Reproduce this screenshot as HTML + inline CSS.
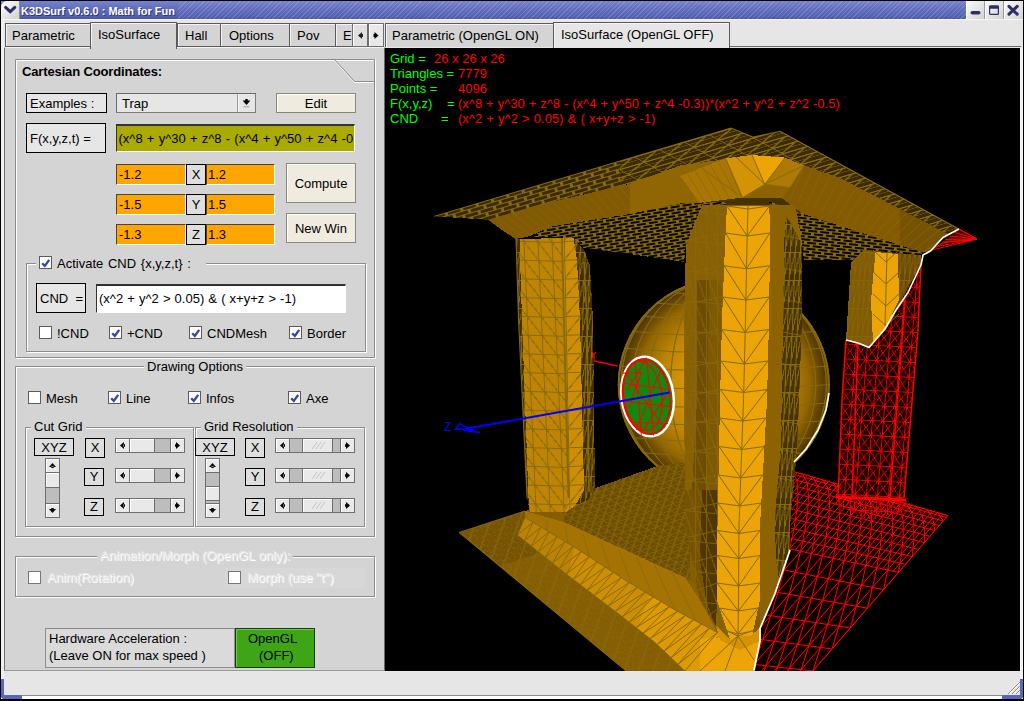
<!DOCTYPE html>
<html>
<head>
<meta charset="utf-8">
<title>K3DSurf v0.6.0 : Math for Fun</title>
<style>
html,body{margin:0;padding:0;background:#000;}
body{width:1024px;height:701px;position:relative;overflow:hidden;font-family:"Liberation Sans",sans-serif;font-size:13px;color:#000;}
.a{position:absolute;box-sizing:border-box;}
.t{position:absolute;white-space:pre;line-height:15px;height:15px;}
#win{left:0;top:0;width:1024px;height:701px;background:#e6e6e6;border:1px solid #000;border-radius:7px 7px 5px 5px;overflow:hidden;}
#title{left:1px;top:1px;width:1022px;height:18px;background:linear-gradient(#7583cd 0%,#636fbe 40%,#5461b1 85%,#49559e 100%);}
#hatch{left:178px;top:1px;width:788px;height:18px;background:repeating-linear-gradient(135deg,rgba(255,255,255,0) 0px,rgba(255,255,255,0) 2.2px,rgba(210,215,240,.22) 2.2px,rgba(210,215,240,.22) 3.2px);}
.wbtn{top:1px;height:18px;background:linear-gradient(135deg,#fafafa,#d2d2d2);border-left:1px solid #fff;border-right:1px solid #9a9a9a;}
.panel{background:#d4d4d4;}
.tab{background:#d4d4d4;border:1px solid #5a5a5a;border-bottom:none;box-shadow:inset 1px 1px 0 #f4f4f4;}
.gb{border:1px solid #8c8c8c;box-shadow:inset 1px 1px 0 #fff,1px 1px 0 #fff;}
.lbl{background:#e6e6e6;border:1px solid #000;}
.gl{background:#d4d4d4;padding:0 3px;}
.cb{width:13px;height:13px;background:#fff;border:1px solid #5c5c5c;}
.cb svg{position:absolute;left:0;top:0;}
.btn{background:#efecdf;border:1px solid #8a8778;box-shadow:inset 1px 1px 0 #fff;}
.sb{background:#bdbdbd;border:1px solid #6e6e6e;}
.sbb{background:#e9e9e9;border:1px solid #6e6e6e;box-shadow:inset 1px 1px 0 #fff;}
.dis{color:#e9e9e9;text-shadow:1px 1px 0 #fff;}
</style>
</head>
<body>
<div id="win" class="a"></div>
<div id="title" class="a"></div>
<div id="hatch" class="a"></div>
<!-- title bar -->
<div class="a" style="left:1px;top:1px;width:19px;height:18px;background:linear-gradient(135deg,#ffffff,#d0d0d0);border-right:1px solid #8a8a8a;border-radius:6px 0 0 0;"></div>
<svg class="a" style="left:1px;top:1px" width="19" height="18" viewBox="0 0 19 18"><path d="M4.6 6.4 L9.2 10.6 L13.8 6.4" fill="none" stroke="#2b2f66" stroke-width="3" stroke-linecap="round" stroke-linejoin="miter"/></svg>
<div class="t" style="left:21px;top:4px;font-size:11px;font-weight:bold;color:#fff;text-shadow:1px 1px 0 #2e3670;letter-spacing:0px;">K3DSurf v0.6.0 : Math for Fun</div>
<div class="a wbtn" style="left:966px;width:19px;"></div>
<div class="a wbtn" style="left:985px;width:19px;"></div>
<div class="a wbtn" style="left:1004px;width:19px;border-right:none;"></div>
<svg class="a" style="left:966px;top:1px" width="57" height="18" viewBox="0 0 57 18">
<rect x="4.5" y="10" width="10" height="3.6" rx="1.8" fill="#2b2f66"/>
<rect x="23.6" y="5" width="8.8" height="8.4" rx="1" fill="none" stroke="#2b2f66" stroke-width="1.2"/><rect x="23" y="4.4" width="10" height="3.4" rx="1" fill="#2b2f66"/>
<path d="M43 5.4 L51.2 13.2 M51.2 5.4 L43 13.2" stroke="#2b2f66" stroke-width="3" stroke-linecap="round"/>
</svg>
<div class="a" style="left:1px;top:19px;width:1022px;height:1px;background:#f6f6f6;"></div>

<!-- left panel -->
<div class="a" style="left:1px;top:20px;width:3px;height:678px;background:#f0f0f0;"></div>
<div class="a panel" style="left:4px;top:47px;width:381px;height:624px;border-left:1px solid #707070;border-top:1px solid #f2f2f2;border-right:1px solid #6a6a6a;border-bottom:1px solid #9a9a9a;"></div>
<!-- left tabs -->
<div class="a tab" style="left:5px;top:23px;width:86px;height:24px;"></div>
<div class="a tab" style="left:177px;top:23px;width:44px;height:24px;"></div>
<div class="a tab" style="left:220px;top:23px;width:70px;height:24px;"></div>
<div class="a tab" style="left:289px;top:23px;width:47px;height:24px;"></div>
<div class="a tab" style="left:335px;top:23px;width:20px;height:24px;border-right:none;"></div>
<div class="a" style="left:5px;top:46px;width:348px;height:1px;background:#5a5a5a;"></div>
<div class="a tab" style="left:90px;top:22px;width:87px;height:27px;border-bottom:none;"></div>
<div class="a" style="left:91px;top:46px;width:85px;height:4px;background:#d4d4d4;"></div>
<div class="t" style="left:12px;top:28px;">Parametric</div>
<div class="t" style="left:98px;top:27px;">IsoSurface</div>
<div class="t" style="left:185px;top:28px;">Hall</div>
<div class="t" style="left:229px;top:28px;">Options</div>
<div class="t" style="left:297px;top:28px;">Pov</div>
<div class="t" style="left:343px;top:28px;">E</div>
<div class="a sbb" style="left:352px;top:23px;width:16px;height:24px;background:#e0e0e0;"></div>
<div class="a sbb" style="left:368px;top:23px;width:16px;height:24px;background:#e8e8e8;"></div>
<svg class="a" style="left:352px;top:23px" width="32" height="24" viewBox="0 0 32 24"><path d="M10 9 L6 12.5 L10 16 Z" fill="#222"/><path d="M22.5 9 L26.5 12.5 L22.5 16 Z" fill="#000"/><rect x="21.5" y="11" width="2" height="3" fill="#000"/><rect x="9" y="11" width="2" height="3" fill="#222"/></svg>

<!-- right tabs -->
<div class="a" style="left:385px;top:46px;width:636px;height:2px;background:#e6e6e6;border-top:1px solid #6a6a6a;"></div>
<div class="a tab" style="left:385px;top:23px;width:169px;height:24px;"></div>
<div class="a tab" style="left:553px;top:22px;width:177px;height:26px;background:#e6e6e6;"></div>
<div class="t" style="left:392px;top:28px;">Parametric (OpenGL ON)</div>
<div class="t" style="left:561px;top:27px;">IsoSurface (OpenGL OFF)</div>
<!-- canvas -->
<div class="a" style="left:385px;top:48px;width:635px;height:623px;background:#000;"></div>
<div class="a" style="left:1020px;top:48px;width:3px;height:648px;background:#f4f4f4;"></div>

<!-- group box 1 -->
<svg class="a" style="left:0;top:0" width="385" height="701" viewBox="0 0 385 701" fill="none">
<path d="M16.5 358.5 V60.5 H373.5 M334.5 60.5 L354.5 82.5 H373.5 M375.5 59.5 V358.5 H16.5" stroke="#fff"/>
<path d="M15.5 357.5 V59.5 H374.5 V357.5 Z M334.5 59.5 L354.5 81.5 H374.5" stroke="#8c8c8c"/>
</svg>
<div class="t" style="left:22px;top:64px;font-weight:bold;letter-spacing:-0.14px;">Cartesian Coordinates:</div>
<div class="a lbl" style="left:26px;top:93px;width:81px;height:20px;"></div><div class="t" style="left:30px;top:96px;">Examples :</div>
<div class="a" style="left:116px;top:93px;width:140px;height:20px;background:#e6e6e6;border:1px solid;border-color:#6a6a6a #7c7c7c #7c7c7c #6a6a6a;"></div>
<div class="t" style="left:122px;top:96px;">Trap</div>
<div class="a" style="left:237px;top:94px;width:1px;height:18px;background:#9a9a9a;"></div><div class="a" style="left:238px;top:94px;width:1px;height:18px;background:#f8f8f8;"></div>
<svg class="a" style="left:238px;top:94px" width="17" height="18" viewBox="0 0 17 18"><path d="M4.6 6.6 H12.4 L8.5 11 Z" fill="#000"/><rect x="7.3" y="5" width="2.4" height="3" fill="#000"/><rect x="5.5" y="12" width="6" height="1.4" fill="#b4b4b4"/></svg>
<div class="a btn" style="left:276px;top:93px;width:80px;height:20px;"></div><div class="t" style="left:276px;width:80px;text-align:center;top:96px;">Edit</div>
<div class="a lbl" style="left:26px;top:123px;width:80px;height:30px;"></div><div class="t" style="left:30px;top:131px;">F(x,y,z,t) =</div>
<div class="a" style="left:116px;top:124px;width:239px;height:28px;background:#aaaa00;border:1px solid;border-color:#333 #fff #fff #333;border-top-width:2px;overflow:hidden;"><div class="t" style="left:1.5px;top:5px;word-spacing:0.6px;">(x^8 + y^30 + z^8 - (x^4 + y^50 + z^4 -0.3))*(x^2 + y^2 + z^2 -0.5)</div></div>

<div class="a" style="left:116px;top:164px;width:70px;height:21px;background:#ffa500;border:1px solid;border-color:#444 #fff #fff #444;"></div><div class="t" style="left:119px;top:167px;">-1.2</div>
<div class="a lbl" style="left:186px;top:164px;width:20px;height:21px;background:#dedede;"></div><div class="t" style="left:186px;width:20px;text-align:center;top:167px;">X</div>
<div class="a" style="left:206px;top:164px;width:69px;height:21px;background:#ffa500;border:1px solid;border-color:#444 #fff #fff #444;"></div><div class="t" style="left:208px;top:167px;">1.2</div>
<div class="a" style="left:116px;top:194px;width:70px;height:21px;background:#ffa500;border:1px solid;border-color:#444 #fff #fff #444;"></div><div class="t" style="left:119px;top:197px;">-1.5</div>
<div class="a lbl" style="left:186px;top:194px;width:20px;height:21px;background:#dedede;"></div><div class="t" style="left:186px;width:20px;text-align:center;top:197px;">Y</div>
<div class="a" style="left:206px;top:194px;width:69px;height:21px;background:#ffa500;border:1px solid;border-color:#444 #fff #fff #444;"></div><div class="t" style="left:208px;top:197px;">1.5</div>
<div class="a" style="left:116px;top:224px;width:70px;height:21px;background:#ffa500;border:1px solid;border-color:#444 #fff #fff #444;"></div><div class="t" style="left:119px;top:227px;">-1.3</div>
<div class="a lbl" style="left:186px;top:224px;width:20px;height:21px;background:#dedede;"></div><div class="t" style="left:186px;width:20px;text-align:center;top:227px;">Z</div>
<div class="a" style="left:206px;top:224px;width:69px;height:21px;background:#ffa500;border:1px solid;border-color:#444 #fff #fff #444;"></div><div class="t" style="left:208px;top:227px;">1.3</div>
<div class="a btn" style="left:286px;top:163px;width:70px;height:40px;"></div><div class="t" style="left:286px;width:70px;text-align:center;top:176px;">Compute</div>
<div class="a btn" style="left:286px;top:213px;width:70px;height:30px;"></div><div class="t" style="left:286px;width:70px;text-align:center;top:221px;">New Win</div>

<!-- CND group -->
<div class="a gb" style="left:26px;top:263px;width:340px;height:89px;"></div>
<div class="a" style="left:36px;top:261px;width:170px;height:6px;background:#d4d4d4;"></div>
<div class="a cb" style="left:39px;top:256px;"><svg width="11" height="11" viewBox="0 0 11 11"><path d="M2.2 6.2 L4.8 9 L9.2 2.8" fill="none" stroke="#3546ac" stroke-width="2.3"/></svg></div>
<div class="t" style="left:57px;top:256px;word-spacing:1.1px;">Activate CND {x,y,z,t} :</div>
<div class="a lbl" style="left:36px;top:283px;width:50px;height:30px;"></div><div class="t" style="left:40px;top:291px;">CND  =</div>
<div class="a" style="left:96px;top:284px;width:250px;height:29px;background:#fff;border:1px solid;border-color:#333 #fff #fff #333;border-top-width:2px;"></div>
<div class="t" style="left:99px;top:291px;word-spacing:0.5px;">(x^2 + y^2 &gt; 0.05) &amp; ( x+y+z &gt; -1)</div>
<div class="a cb" style="left:39px;top:326px;"></div><div class="t" style="left:57px;top:326px;">!CND</div>
<div class="a cb" style="left:109px;top:326px;"><svg width="11" height="11" viewBox="0 0 11 11"><path d="M2.2 6.2 L4.8 9 L9.2 2.8" fill="none" stroke="#3546ac" stroke-width="2.3"/></svg></div><div class="t" style="left:127px;top:326px;">+CND</div>
<div class="a cb" style="left:189px;top:326px;"><svg width="11" height="11" viewBox="0 0 11 11"><path d="M2.2 6.2 L4.8 9 L9.2 2.8" fill="none" stroke="#3546ac" stroke-width="2.3"/></svg></div><div class="t" style="left:207px;top:326px;">CNDMesh</div>
<div class="a cb" style="left:289px;top:326px;"><svg width="11" height="11" viewBox="0 0 11 11"><path d="M2.2 6.2 L4.8 9 L9.2 2.8" fill="none" stroke="#3546ac" stroke-width="2.3"/></svg></div><div class="t" style="left:307px;top:326px;">Border</div>

<!-- Drawing options -->
<div class="a gb" style="left:15px;top:366px;width:360px;height:171px;"></div>
<div class="t gl" style="left:144px;top:359px;">Drawing Options</div>
<div class="a cb" style="left:28px;top:391px;"></div><div class="t" style="left:46px;top:391px;">Mesh</div>
<div class="a cb" style="left:108px;top:391px;"><svg width="11" height="11" viewBox="0 0 11 11"><path d="M2.2 6.2 L4.8 9 L9.2 2.8" fill="none" stroke="#3546ac" stroke-width="2.3"/></svg></div><div class="t" style="left:126px;top:391px;">Line</div>
<div class="a cb" style="left:188px;top:391px;"><svg width="11" height="11" viewBox="0 0 11 11"><path d="M2.2 6.2 L4.8 9 L9.2 2.8" fill="none" stroke="#3546ac" stroke-width="2.3"/></svg></div><div class="t" style="left:206px;top:391px;">Infos</div>
<div class="a cb" style="left:288px;top:391px;"><svg width="11" height="11" viewBox="0 0 11 11"><path d="M2.2 6.2 L4.8 9 L9.2 2.8" fill="none" stroke="#3546ac" stroke-width="2.3"/></svg></div><div class="t" style="left:306px;top:391px;">Axe</div>

<div class="a gb" style="left:25px;top:427px;width:169px;height:100px;"></div>
<div class="t gl" style="left:31px;top:419px;padding:0 4px 0 3px;">Cut Grid</div>
<div class="a gb" style="left:195px;top:427px;width:170px;height:100px;"></div>
<div class="t gl" style="left:201px;top:419px;">Grid Resolution</div>

<div class="a lbl" style="left:34px;top:438px;width:40px;height:18px;background:#dedede;"></div><div class="t" style="left:34px;width:40px;text-align:center;top:440px;">XYZ</div>
<div class="a lbl" style="left:85px;top:438px;width:20px;height:20px;background:#dedede;"></div><div class="t" style="left:85px;width:20px;text-align:center;top:440px;">X</div>
<div class="a lbl" style="left:84px;top:468px;width:20px;height:18px;background:#dedede;"></div><div class="t" style="left:84px;width:20px;text-align:center;top:469px;">Y</div>
<div class="a lbl" style="left:84px;top:498px;width:20px;height:18px;background:#dedede;"></div><div class="t" style="left:84px;width:20px;text-align:center;top:499px;">Z</div>
<div class="a lbl" style="left:195px;top:438px;width:40px;height:18px;background:#dedede;"></div><div class="t" style="left:195px;width:40px;text-align:center;top:440px;">XYZ</div>
<div class="a lbl" style="left:245px;top:438px;width:20px;height:20px;background:#dedede;"></div><div class="t" style="left:245px;width:20px;text-align:center;top:440px;">X</div>
<div class="a lbl" style="left:245px;top:468px;width:20px;height:18px;background:#dedede;"></div><div class="t" style="left:245px;width:20px;text-align:center;top:469px;">Y</div>
<div class="a lbl" style="left:245px;top:498px;width:20px;height:18px;background:#dedede;"></div><div class="t" style="left:245px;width:20px;text-align:center;top:499px;">Z</div>
<!--SB0-->
<div class="a sb" style="left:115px;top:438px;width:70px;height:15px;"></div>
<div class="a sbb" style="left:115px;top:438px;width:15px;height:15px;"></div>
<svg class="a" style="left:115px;top:438px" width="15" height="15" viewBox="0 0 15 15"><path d="M9 4 L5 7.5 L9 11 Z M8.5 6.3 h1.5 v2.4 h-1.5Z" fill="#000"/></svg>
<div class="a sbb" style="left:170px;top:438px;width:15px;height:15px;"></div>
<svg class="a" style="left:170px;top:438px" width="15" height="15" viewBox="0 0 15 15"><path d="M6 4 L10 7.5 L6 11 Z M5 6.3 h1.5 v2.4 h-1.5Z" fill="#000"/></svg>
<div class="a sbb" style="left:129px;top:438px;width:26px;height:15px;"></div>
<div class="a sb" style="left:275px;top:438px;width:80px;height:15px;"></div>
<div class="a sbb" style="left:275px;top:438px;width:15px;height:15px;"></div>
<svg class="a" style="left:275px;top:438px" width="15" height="15" viewBox="0 0 15 15"><path d="M9 4 L5 7.5 L9 11 Z M8.5 6.3 h1.5 v2.4 h-1.5Z" fill="#000"/></svg>
<div class="a sbb" style="left:340px;top:438px;width:15px;height:15px;"></div>
<svg class="a" style="left:340px;top:438px" width="15" height="15" viewBox="0 0 15 15"><path d="M6 4 L10 7.5 L6 11 Z M5 6.3 h1.5 v2.4 h-1.5Z" fill="#000"/></svg>
<div class="a sbb" style="left:302px;top:438px;width:31px;height:15px;"></div>
<svg class="a" style="left:309.5px;top:441px" width="16" height="9" viewBox="0 0 16 9"><path d="M2 8 L7 1 M6 8 L11 1 M10 8 L15 1" stroke="#c4c4c4" stroke-width="1"/></svg>
<div class="a sb" style="left:115px;top:468px;width:70px;height:15px;"></div>
<div class="a sbb" style="left:115px;top:468px;width:15px;height:15px;"></div>
<svg class="a" style="left:115px;top:468px" width="15" height="15" viewBox="0 0 15 15"><path d="M9 4 L5 7.5 L9 11 Z M8.5 6.3 h1.5 v2.4 h-1.5Z" fill="#000"/></svg>
<div class="a sbb" style="left:170px;top:468px;width:15px;height:15px;"></div>
<svg class="a" style="left:170px;top:468px" width="15" height="15" viewBox="0 0 15 15"><path d="M6 4 L10 7.5 L6 11 Z M5 6.3 h1.5 v2.4 h-1.5Z" fill="#000"/></svg>
<div class="a sbb" style="left:129px;top:468px;width:26px;height:15px;"></div>
<div class="a sb" style="left:275px;top:468px;width:80px;height:15px;"></div>
<div class="a sbb" style="left:275px;top:468px;width:15px;height:15px;"></div>
<svg class="a" style="left:275px;top:468px" width="15" height="15" viewBox="0 0 15 15"><path d="M9 4 L5 7.5 L9 11 Z M8.5 6.3 h1.5 v2.4 h-1.5Z" fill="#000"/></svg>
<div class="a sbb" style="left:340px;top:468px;width:15px;height:15px;"></div>
<svg class="a" style="left:340px;top:468px" width="15" height="15" viewBox="0 0 15 15"><path d="M6 4 L10 7.5 L6 11 Z M5 6.3 h1.5 v2.4 h-1.5Z" fill="#000"/></svg>
<div class="a sbb" style="left:302px;top:468px;width:31px;height:15px;"></div>
<svg class="a" style="left:309.5px;top:471px" width="16" height="9" viewBox="0 0 16 9"><path d="M2 8 L7 1 M6 8 L11 1 M10 8 L15 1" stroke="#c4c4c4" stroke-width="1"/></svg>
<div class="a sb" style="left:115px;top:498px;width:70px;height:15px;"></div>
<div class="a sbb" style="left:115px;top:498px;width:15px;height:15px;"></div>
<svg class="a" style="left:115px;top:498px" width="15" height="15" viewBox="0 0 15 15"><path d="M9 4 L5 7.5 L9 11 Z M8.5 6.3 h1.5 v2.4 h-1.5Z" fill="#000"/></svg>
<div class="a sbb" style="left:170px;top:498px;width:15px;height:15px;"></div>
<svg class="a" style="left:170px;top:498px" width="15" height="15" viewBox="0 0 15 15"><path d="M6 4 L10 7.5 L6 11 Z M5 6.3 h1.5 v2.4 h-1.5Z" fill="#000"/></svg>
<div class="a sbb" style="left:129px;top:498px;width:26px;height:15px;"></div>
<div class="a sb" style="left:275px;top:498px;width:80px;height:15px;"></div>
<div class="a sbb" style="left:275px;top:498px;width:15px;height:15px;"></div>
<svg class="a" style="left:275px;top:498px" width="15" height="15" viewBox="0 0 15 15"><path d="M9 4 L5 7.5 L9 11 Z M8.5 6.3 h1.5 v2.4 h-1.5Z" fill="#000"/></svg>
<div class="a sbb" style="left:340px;top:498px;width:15px;height:15px;"></div>
<svg class="a" style="left:340px;top:498px" width="15" height="15" viewBox="0 0 15 15"><path d="M6 4 L10 7.5 L6 11 Z M5 6.3 h1.5 v2.4 h-1.5Z" fill="#000"/></svg>
<div class="a sbb" style="left:302px;top:498px;width:31px;height:15px;"></div>
<svg class="a" style="left:309.5px;top:501px" width="16" height="9" viewBox="0 0 16 9"><path d="M2 8 L7 1 M6 8 L11 1 M10 8 L15 1" stroke="#c4c4c4" stroke-width="1"/></svg>
<div class="a sb" style="left:45px;top:458px;width:15px;height:60px;"></div>
<div class="a sbb" style="left:45px;top:458px;width:15px;height:15px;"></div>
<svg class="a" style="left:45px;top:458px" width="15" height="15" viewBox="0 0 15 15"><path d="M4 9 L7.5 5 L11 9 Z M6.3 8.5 v1.5 h2.4 v-1.5Z" fill="#000"/></svg>
<div class="a sbb" style="left:45px;top:503px;width:15px;height:15px;"></div>
<svg class="a" style="left:45px;top:503px" width="15" height="15" viewBox="0 0 15 15"><path d="M4 6 L7.5 10 L11 6 Z M6.3 5 v1.5 h2.4 v-1.5Z" fill="#000"/></svg>
<div class="a sbb" style="left:45px;top:472px;width:15px;height:16px;"></div>
<div class="a sb" style="left:205px;top:458px;width:15px;height:60px;"></div>
<div class="a sbb" style="left:205px;top:458px;width:15px;height:15px;"></div>
<svg class="a" style="left:205px;top:458px" width="15" height="15" viewBox="0 0 15 15"><path d="M4 9 L7.5 5 L11 9 Z M6.3 8.5 v1.5 h2.4 v-1.5Z" fill="#000"/></svg>
<div class="a sbb" style="left:205px;top:503px;width:15px;height:15px;"></div>
<svg class="a" style="left:205px;top:503px" width="15" height="15" viewBox="0 0 15 15"><path d="M4 6 L7.5 10 L11 6 Z M6.3 5 v1.5 h2.4 v-1.5Z" fill="#000"/></svg>
<div class="a sbb" style="left:205px;top:486px;width:15px;height:15px;"></div>
<!--SB1-->

<!-- Animation -->
<div class="a gb" style="left:15px;top:556px;width:360px;height:41px;"></div>
<div class="t gl dis" style="left:97px;top:548px;">Animation/Morph (OpenGL only):</div>
<div class="a cb" style="left:28px;top:571px;border-color:#777;"></div><div class="t dis" style="left:47px;top:570px;">Anim(Rotation)</div>
<div class="a" style="left:225px;top:568px;width:140px;height:20px;background:#d7d7d7;"></div>
<div class="a cb" style="left:228px;top:571px;border-color:#777;"></div><div class="t dis" style="left:247px;top:570px;">Morph (use "t")</div>

<!-- Hardware -->
<div class="a" style="left:45px;top:628px;width:190px;height:40px;background:#dadada;border:1px solid #8c8c8c;"></div>
<div class="t" style="left:49px;top:631px;">Hardware Acceleration :</div>
<div class="t" style="left:49px;top:648px;">(Leave ON for max speed )</div>
<div class="a" style="left:235px;top:628px;width:80px;height:40px;background:#3da516;border:1px solid #1c3a0c;box-shadow:inset 1px 1px 0 #6cc948;"></div>
<div class="t" style="left:248px;top:631px;">OpenGL</div>
<div class="t" style="left:259px;top:648px;">(OFF)</div>

<!-- status / frame -->
<div class="a" style="left:1px;top:695px;width:1022px;height:1px;background:#8c8c8c;"></div>
<div class="a" style="left:1px;top:696px;width:1022px;height:3px;background:#fff;"></div>
<div class="a" style="left:0px;top:699px;width:1024px;height:2px;background:#000;"></div>
<div class="a" style="left:1px;top:679px;width:3px;height:20px;background:#5a66b8;border-radius:0 0 0 3px;"></div>
<div class="a" style="left:1px;top:695px;width:21px;height:4px;background:#5a66b8;border-radius:0 0 0 4px;"></div>
<div class="a" style="left:1020px;top:679px;width:3px;height:20px;background:#5a66b8;border-radius:0 0 3px 0;"></div>
<div class="a" style="left:1002px;top:695px;width:21px;height:4px;background:#5a66b8;border-radius:0 0 4px 0;"></div>
<svg class="a" style="left:1004px;top:678px" width="16" height="17" viewBox="0 0 16 17"><path d="M4 16 L16 4 M8 16 L16 8 M12 16 L16 12" stroke="#8c8c8c" stroke-width="1"/><path d="M5 16 L16 5 M9 16 L16 9 M13 16 L16 13" stroke="#fff" stroke-width="1"/></svg>

<!-- info text -->
<div class="t" style="left:390px;top:51px;color:#00ff00;">Grid =</div><div class="t" style="left:434px;top:51px;color:#ff0000;">26 x 26 x 26</div>
<div class="t" style="left:390px;top:66px;color:#00ff00;">Triangles =</div><div class="t" style="left:458px;top:66px;color:#ff0000;">7779</div>
<div class="t" style="left:390px;top:81px;color:#00ff00;">Points =</div><div class="t" style="left:458px;top:81px;color:#ff0000;">4096</div>
<div class="t" style="left:390px;top:96px;color:#00ff00;">F(x,y,z)</div><div class="t" style="left:447px;top:96px;color:#00ff00;">=</div><div class="t" style="left:458px;top:96px;color:#ff0000;word-spacing:0.33px;">(x^8 + y^30 + z^8 - (x^4 + y^50 + z^4 -0.3))*(x^2 + y^2 + z^2 -0.5)</div>
<div class="t" style="left:390px;top:111px;color:#00ff00;">CND</div><div class="t" style="left:441px;top:111px;color:#00ff00;">=</div><div class="t" style="left:458px;top:111px;color:#ff0000;word-spacing:0.55px;">(x^2 + y^2 &gt; 0.05) &amp; ( x+y+z &gt; -1)</div>

<svg class="a" style="left:385px;top:48px" width="635" height="623" viewBox="385 48 635 623" shape-rendering="crispEdges">
<defs>
<pattern id="pr1" width="11" height="11" patternUnits="userSpaceOnUse" patternTransform="matrix(1 0.28 -0.75 0.9 3 0)"><path d="M0 .5H11M.5 0V11M0 0L11 11" stroke="#f00" stroke-width="1" fill="none"/></pattern>
<pattern id="pr2" width="11" height="15" patternUnits="userSpaceOnUse" patternTransform="matrix(1 0.05 -0.08 1 0 0)"><path d="M0 .5H11M.5 0V15M0 0L11 15M11 0L0 15" stroke="#f00" stroke-width="0.9" fill="none"/></pattern>
<pattern id="ptopA" width="16" height="8" patternUnits="userSpaceOnUse" patternTransform="rotate(-16.5 434 216)"><rect width="16" height="8" fill="#866a10"/><rect x="0" y="0" width="13" height="2.8" fill="#3b2901"/><rect x="7" y="4" width="13" height="2.8" fill="#3b2901"/><rect x="-9" y="4" width="13" height="2.8" fill="#3b2901"/></pattern>
<pattern id="ptopB" width="26" height="11" patternUnits="userSpaceOnUse" patternTransform="matrix(0.9586 -0.2847 0.8773 0.48 434 216)"><rect width="26" height="11" fill="#3b2901"/><path d="M0 .7H26M.7 0V11M0 11L26 0" stroke="#866a10" stroke-width="1.4" fill="none"/><path d="M0 5.5H26" stroke="#866a10" stroke-width="0.7" fill="none"/></pattern>
<pattern id="pdash" width="12" height="6" patternUnits="userSpaceOnUse" patternTransform="rotate(-9)"><rect x="0" y="0" width="8.5" height="1.7" fill="#0c0800"/><rect x="6" y="3" width="8.5" height="1.7" fill="#0c0800"/><rect x="-6" y="3" width="8.5" height="1.7" fill="#0c0800"/></pattern>
<pattern id="pdash2" width="12" height="6" patternUnits="userSpaceOnUse" patternTransform="rotate(6)"><rect x="0" y="0" width="8.5" height="1.7" fill="#0c0800"/><rect x="6" y="3" width="8.5" height="1.7" fill="#0c0800"/><rect x="-6" y="3" width="8.5" height="1.7" fill="#0c0800"/></pattern>
<pattern id="pcolL" width="14" height="18.75" patternUnits="userSpaceOnUse" patternTransform="matrix(1 0.03 0.045 1 523.5 241)"><path d="M0 .5H14M.5 0V18.75M0 0L14 18.75" stroke="#866a10" stroke-width="1" fill="none"/></pattern>
<pattern id="pcolR" width="16" height="18.75" patternUnits="userSpaceOnUse" patternTransform="matrix(1 -0.03 0.02 1 564 241)"><path d="M0 .5H16M.5 0V18.75M16 0L0 18.75" stroke="#866a10" stroke-width="1" fill="none"/></pattern>
<pattern id="pm2" width="9" height="7" patternUnits="userSpaceOnUse" patternTransform="matrix(1 -0.33 0.95 0.55 0 0)"><path d="M0 .5H9M.5 0V7M0 7L9 0" stroke="#866a10" stroke-width="1" fill="none"/></pattern>
<pattern id="pm3" width="13" height="13" patternUnits="userSpaceOnUse" patternTransform="matrix(1 0.3 0.85 0.72 0 0)"><path d="M0 .5H13M.5 0V13M0 13L13 0" stroke="#866a10" stroke-width="1" fill="none"/></pattern>
<pattern id="pm4" width="5" height="28" patternUnits="userSpaceOnUse" patternTransform="matrix(1 0 -0.04 1 0 0)"><path d="M.5 0V28M0 .5H5M0 28L5 0" stroke="#866a10" stroke-width="1" fill="none"/></pattern>
<pattern id="pm5" width="11" height="30" patternUnits="userSpaceOnUse" patternTransform="matrix(1 0.1 0 1 684 210)"><path d="M.5 0V30M0 .5H11M0 0L11 30" stroke="#866a10" stroke-width="1" fill="none"/></pattern>
<radialGradient id="gs" cx="0.5" cy="0.5" r="0.5"><stop offset="0" stop-color="#e49f05"/><stop offset="0.38" stop-color="#d49305"/><stop offset="0.6" stop-color="#bc8304"/><stop offset="0.8" stop-color="#946703"/><stop offset="0.92" stop-color="#634402"/><stop offset="1" stop-color="#463101"/></radialGradient>
<clipPath id="csph"><circle cx="723.75" cy="384.5" r="106.25"/></clipPath>
</defs>
<polygon points="792,471 948,515.5 813,671 753,671 760,641 760,628 775,593 790,550" fill="#100000" />
<clipPath id="crf"><polygon points="792,471 948,515.5 813,671 753,671 760,641 760,628 775,593 790,550"/></clipPath>
<g clip-path="url(#crf)" stroke="#f00" stroke-width="1" fill="none" shape-rendering="auto">
<polyline points="792,471 786.498,477.401 776.967,488.488 764.938,502.483 750.93,518.78 735.24,537.033 718.064,557.015 699.545,578.559 679.793,601.538 658.896,625.848 636.926,651.408 613.943,678.145 590,706"/>
<polyline points="802.4,473.967 796.945,480.309 787.496,491.294 775.57,505.16 761.682,521.306 746.127,539.391 729.098,559.189 710.738,580.534 691.156,603.301 670.438,627.387 648.657,652.711 625.871,679.202 602.133,706.8"/>
<polyline points="812.8,476.933 807.392,483.216 798.025,494.099 786.202,507.836 772.435,523.832 757.014,541.749 740.133,561.362 721.932,582.509 702.519,605.064 681.981,628.926 660.387,654.014 637.799,680.259 614.267,707.6"/>
<polyline points="823.2,479.9 817.839,486.124 808.554,496.905 796.834,510.513 783.187,526.358 767.901,544.107 751.167,563.536 733.125,584.484 713.882,606.827 693.523,630.465 672.118,655.318 649.727,681.315 626.4,708.4"/>
<polyline points="833.6,482.867 828.287,489.032 819.083,499.71 807.467,513.189 793.94,528.884 778.788,546.464 762.201,565.71 744.318,586.459 725.245,608.59 705.065,632.004 683.849,656.621 661.655,682.372 638.533,709.2"/>
<polyline points="844,485.833 838.734,491.939 829.612,502.515 818.099,515.865 804.692,531.41 789.675,548.822 773.236,567.883 755.512,588.434 736.607,610.353 716.607,633.543 695.579,657.924 673.583,683.429 650.667,710"/>
<polyline points="854.4,488.8 849.181,494.847 840.141,505.321 828.731,518.542 815.444,533.936 800.562,551.18 784.27,570.057 766.705,590.409 747.97,612.116 728.149,635.082 707.31,659.228 685.511,684.486 662.8,710.8"/>
<polyline points="864.8,491.767 859.628,497.755 850.67,508.126 839.363,521.218 826.197,536.463 811.449,553.538 795.305,572.23 777.898,592.384 759.333,613.879 739.691,636.621 719.041,660.531 697.439,685.543 674.933,711.6"/>
<polyline points="875.2,494.733 870.075,500.662 861.199,510.932 849.995,523.895 836.949,538.989 822.336,555.896 806.339,574.404 789.092,594.359 770.696,615.643 751.233,638.16 730.771,661.834 709.366,686.6 687.067,712.4"/>
<polyline points="885.6,497.7 880.523,503.57 871.728,513.737 860.628,526.571 847.702,541.515 833.223,558.254 817.374,576.578 800.285,596.334 782.059,617.406 762.776,639.699 742.502,663.138 721.294,687.656 699.2,713.2"/>
<polyline points="896,500.667 890.97,506.478 882.257,516.543 871.26,529.247 858.454,544.041 844.11,560.612 828.408,578.751 811.478,598.309 793.422,619.169 774.318,641.238 754.233,664.441 733.222,688.713 711.333,714"/>
<polyline points="906.4,503.633 901.417,509.385 892.786,519.348 881.892,531.924 869.207,546.567 854.997,562.969 839.442,580.925 822.672,600.284 804.784,620.932 785.86,642.777 765.963,665.744 745.15,689.77 723.467,714.8"/>
<polyline points="916.8,506.6 911.864,512.293 903.315,522.153 892.524,534.6 879.959,549.093 865.884,565.327 850.477,583.098 833.865,602.259 816.147,622.695 797.402,644.316 777.694,667.048 757.078,690.827 735.6,715.6"/>
<polyline points="927.2,509.567 922.312,515.201 913.844,524.959 903.157,537.276 890.711,551.619 876.771,567.685 861.511,585.272 845.058,604.234 827.51,624.458 808.944,645.855 789.425,668.351 769.006,691.884 747.733,716.4"/>
<polyline points="937.6,512.533 932.759,518.108 924.373,527.764 913.789,539.953 901.464,554.146 887.658,570.043 872.546,587.446 856.252,606.209 838.873,626.221 820.486,647.394 801.155,669.654 780.934,692.94 759.867,717.2"/>
<polyline points="948,515.5 943.206,521.016 934.902,530.57 924.421,542.629 912.216,556.672 898.545,572.401 883.58,589.619 867.445,608.184 850.236,627.985 832.028,648.933 812.886,670.958 792.862,693.997 772,718"/>
<polyline points="792,471 948,515.5"/>
<polyline points="786.498,477.401 943.206,521.016"/>
<polyline points="776.967,488.488 934.902,530.57"/>
<polyline points="764.938,502.483 924.421,542.629"/>
<polyline points="750.93,518.78 912.216,556.672"/>
<polyline points="735.24,537.033 898.545,572.401"/>
<polyline points="718.064,557.015 883.58,589.619"/>
<polyline points="699.545,578.559 867.445,608.184"/>
<polyline points="679.793,601.538 850.236,627.985"/>
<polyline points="658.896,625.848 832.028,648.933"/>
<polyline points="636.926,651.408 812.886,670.958"/>
<polyline points="613.943,678.145 792.862,693.997"/>
<polyline points="590,706 772,718"/>
<polyline points="613.943,678.145 602.133,706.8"/>
<polyline points="636.926,651.408 625.871,679.202 614.267,707.6"/>
<polyline points="658.896,625.848 648.657,652.711 637.799,680.259 626.4,708.4"/>
<polyline points="679.793,601.538 670.438,627.387 660.387,654.014 649.727,681.315 638.533,709.2"/>
<polyline points="699.545,578.559 691.156,603.301 681.981,628.926 672.118,655.318 661.655,682.372 650.667,710"/>
<polyline points="718.064,557.015 710.738,580.534 702.519,605.064 693.523,630.465 683.849,656.621 673.583,683.429 662.8,710.8"/>
<polyline points="735.24,537.033 729.098,559.189 721.932,582.509 713.882,606.827 705.065,632.004 695.579,657.924 685.511,684.486 674.933,711.6"/>
<polyline points="750.93,518.78 746.127,539.391 740.133,561.362 733.125,584.484 725.245,608.59 716.607,633.543 707.31,659.228 697.439,685.543 687.067,712.4"/>
<polyline points="764.938,502.483 761.682,521.306 757.014,541.749 751.167,563.536 744.318,586.459 736.607,610.353 728.149,635.082 719.041,660.531 709.366,686.6 699.2,713.2"/>
<polyline points="776.967,488.488 775.57,505.16 772.435,523.832 767.901,544.107 762.201,565.71 755.512,588.434 747.97,612.116 739.691,636.621 730.771,661.834 721.294,687.656 711.333,714"/>
<polyline points="786.498,477.401 787.496,491.294 786.202,507.836 783.187,526.358 778.788,546.464 773.236,567.883 766.705,590.409 759.333,613.879 751.233,638.16 742.502,663.138 733.222,688.713 723.467,714.8"/>
<polyline points="792,471 796.945,480.309 798.025,494.099 796.834,510.513 793.94,528.884 789.675,548.822 784.27,570.057 777.898,592.384 770.696,615.643 762.776,639.699 754.233,664.441 745.15,689.77 735.6,715.6"/>
<polyline points="802.4,473.967 807.392,483.216 808.554,496.905 807.467,513.189 804.692,531.41 800.562,551.18 795.305,572.23 789.092,594.359 782.059,617.406 774.318,641.238 765.963,665.744 757.078,690.827 747.733,716.4"/>
<polyline points="812.8,476.933 817.839,486.124 819.083,499.71 818.099,515.865 815.444,533.936 811.449,553.538 806.339,574.404 800.285,596.334 793.422,619.169 785.86,642.777 777.694,667.048 769.006,691.884 759.867,717.2"/>
<polyline points="823.2,479.9 828.287,489.032 829.612,502.515 828.731,518.542 826.197,536.463 822.336,555.896 817.374,576.578 811.478,598.309 804.784,620.932 797.402,644.316 789.425,668.351 780.934,692.94 772,718"/>
<polyline points="833.6,482.867 838.734,491.939 840.141,505.321 839.363,521.218 836.949,538.989 833.223,558.254 828.408,578.751 822.672,600.284 816.147,622.695 808.944,645.855 801.155,669.654 792.862,693.997"/>
<polyline points="844,485.833 849.181,494.847 850.67,508.126 849.995,523.895 847.702,541.515 844.11,560.612 839.442,580.925 833.865,602.259 827.51,624.458 820.486,647.394 812.886,670.958"/>
<polyline points="854.4,488.8 859.628,497.755 861.199,510.932 860.628,526.571 858.454,544.041 854.997,562.969 850.477,583.098 845.058,604.234 838.873,626.221 832.028,648.933"/>
<polyline points="864.8,491.767 870.075,500.662 871.728,513.737 871.26,529.247 869.207,546.567 865.884,565.327 861.511,585.272 856.252,606.209 850.236,627.985"/>
<polyline points="875.2,494.733 880.523,503.57 882.257,516.543 881.892,531.924 879.959,549.093 876.771,567.685 872.546,587.446 867.445,608.184"/>
<polyline points="885.6,497.7 890.97,506.478 892.786,519.348 892.524,534.6 890.711,551.619 887.658,570.043 883.58,589.619"/>
<polyline points="896,500.667 901.417,509.385 903.315,522.153 903.157,537.276 901.464,554.146 898.545,572.401"/>
<polyline points="906.4,503.633 911.864,512.293 913.844,524.959 913.789,539.953 912.216,556.672"/>
<polyline points="916.8,506.6 922.312,515.201 924.373,527.764 924.421,542.629"/>
<polyline points="927.2,509.567 932.759,518.108 934.902,530.57"/>
<polyline points="937.6,512.533 943.206,521.016"/>
<polyline points="789.986,473.343 946.245,517.519"/>
<polyline points="782.095,482.524 939.37,525.43"/>
<polyline points="771.224,495.17 929.899,536.327"/>
<polyline points="758.159,510.369 918.515,549.424"/>
<polyline points="743.281,527.678 905.552,564.339"/>
<polyline points="797.2,472.483 740.683,538.212"/>
<polyline points="807.6,475.45 751.57,540.57"/>
<polyline points="818,478.417 762.457,542.928"/>
<polyline points="828.4,481.383 773.344,545.286"/>
<polyline points="838.8,484.35 784.231,547.643"/>
<polyline points="849.2,487.317 795.118,550.001"/>
<polyline points="859.6,490.283 806.005,552.359"/>
<polyline points="870,493.25 816.893,554.717"/>
<polyline points="880.4,496.217 827.78,557.075"/>
<polyline points="890.8,499.183 838.667,559.433"/>
<polyline points="901.2,502.15 849.554,561.791"/>
<polyline points="911.6,505.117 860.441,564.148"/>
<polyline points="922,508.083 871.328,566.506"/>
<polyline points="932.4,511.05 882.215,568.864"/>
<polyline points="942.8,514.017 893.102,571.222"/>
</g>
<polyline points="792,471 948,515.5 813,671" fill="none" stroke="#f00" stroke-width="1" shape-rendering="auto"/>
<polygon points="846,340 869,347 885,329 896,310 921,264 918,330 904,498 838,498 842,400" fill="#1c0000" />
<polygon points="846,340 869,347 885,329 896,310 921,264 918,330 904,498 838,498 842,400" fill="url(#pr2)" />
<polyline points="846,340 842,400 838,498" fill="none" stroke="#f00" stroke-width="1.5" shape-rendering="auto"/>
<polyline points="921,264 918,330 904,498" fill="none" stroke="#f00" stroke-width="1.5" shape-rendering="auto"/>
<polyline points="858,344 852,498" fill="none" stroke="#f00" stroke-width="1.5" shape-rendering="auto"/>
<polyline points="905,300 890,498" fill="none" stroke="#f00" stroke-width="1.5" shape-rendering="auto"/>
<polygon points="838,498 904,498 915,508 870,520 832,503" fill="url(#pr2)" />
<polyline points="836,497 906,500" fill="none" stroke="#f00" stroke-width="3" shape-rendering="auto"/>
<polygon points="959,229 977,239 944,242 932,250" fill="#500000" />
<polyline points="959,229 977,239" fill="none" stroke="#f00" stroke-width="1" shape-rendering="auto"/>
<polyline points="954.5,232.5 977,239" fill="none" stroke="#f00" stroke-width="1" shape-rendering="auto"/>
<polyline points="950,236 977,239" fill="none" stroke="#f00" stroke-width="1" shape-rendering="auto"/>
<polyline points="945.5,239.5 977,239" fill="none" stroke="#f00" stroke-width="1" shape-rendering="auto"/>
<polyline points="941,243 977,239" fill="none" stroke="#f00" stroke-width="1" shape-rendering="auto"/>
<polyline points="936.5,246.5 977,239" fill="none" stroke="#f00" stroke-width="1" shape-rendering="auto"/>
<polyline points="932,250 977,239" fill="none" stroke="#f00" stroke-width="1" shape-rendering="auto"/>
<polyline points="959,229 977,239 944,242 932,250" fill="none" stroke="#f00" stroke-width="1" shape-rendering="auto"/>
<polygon points="434.3,216.3 620,161 620,186 547,203 488.6,219.8" fill="url(#ptopA)" />
<polygon points="620,161 731,128 753,137 752,155 725.5,158.4 720,160 680,165.5 630,183.7 620,186" fill="url(#ptopB)" />
<polygon points="753,137 780.4,131.3 959,229 948,234 840,178 804,165.5 785,157.6 752,155" fill="url(#ptopB)" />
<polyline points="434.3,216.3 731,128 753,137 780.4,131.3 959,229" fill="none" stroke="#866a10" stroke-width="1" shape-rendering="auto"/>
<polygon points="488.6,219.8 547,203 630,183.7 680,165.5 680,203.5 630,214 551,226.6 530,236 516,239 502,230" fill="#815a03" />
<polygon points="630,183.7 680,165.5 720,160 725.5,158.4 742.7,197.6 725,202 680,203.5 630,214" fill="#926503" />
<polygon points="680,176 725.5,158.4 742.7,197.6 700,203" fill="#a97604" />
<polygon points="804,165.5 840,178 948,234 959,229 943,237.5 930.5,251 923,252.5 800,213 782,198.4 790,187.5" fill="#765203" />
<polygon points="804,165.5 840,178 900,209 900,245 800,213 782,198.4 790,187.5" fill="#845b03" />
<polygon points="725.5,158.4 752,155 764.7,184.3 742.7,197.6" fill="#d49305" />
<polygon points="752,155 785,157.6 764.7,184.3" fill="#eca406" />
<polygon points="785,157.6 804,165.5 790,187.5 764.7,184.3" fill="#ae7904" />
<polygon points="764.7,184.3 790,187.5 782,198.4 742.7,197.6" fill="#8d6203" />
<polyline points="725.5,158.4 742.7,197.6" fill="none" stroke="#866a10" stroke-width="1" shape-rendering="auto"/>
<polyline points="752,155 764.7,184.3" fill="none" stroke="#866a10" stroke-width="1" shape-rendering="auto"/>
<polyline points="785,157.6 764.7,184.3" fill="none" stroke="#866a10" stroke-width="1" shape-rendering="auto"/>
<polyline points="742.7,197.6 764.7,184.3" fill="none" stroke="#866a10" stroke-width="1" shape-rendering="auto"/>
<polyline points="790,187.5 764.7,184.3" fill="none" stroke="#866a10" stroke-width="1" shape-rendering="auto"/>
<polyline points="736,157 764.7,184.3" fill="none" stroke="#866a10" stroke-width="1" shape-rendering="auto"/>
<polyline points="700,167 742.7,197.6" fill="none" stroke="#866a10" stroke-width="1" shape-rendering="auto"/>
<polyline points="804,165.5 790,187.5" fill="none" stroke="#866a10" stroke-width="1" shape-rendering="auto"/>
<polyline points="804,165.5 764.7,184.3" fill="none" stroke="#866a10" stroke-width="1" shape-rendering="auto"/>
<polyline points="488.6,219.8 516,239" fill="none" stroke="#866a10" stroke-width="1" shape-rendering="auto" opacity="0.75"/>
<polyline points="496.769,217.683 523.974,237.628" fill="none" stroke="#866a10" stroke-width="1" shape-rendering="auto" opacity="0.75"/>
<polyline points="504.938,215.566 531.947,236.257" fill="none" stroke="#866a10" stroke-width="1" shape-rendering="auto" opacity="0.75"/>
<polyline points="513.107,213.448 539.921,234.885" fill="none" stroke="#866a10" stroke-width="1" shape-rendering="auto" opacity="0.75"/>
<polyline points="521.276,211.331 547.894,233.513" fill="none" stroke="#866a10" stroke-width="1" shape-rendering="auto" opacity="0.75"/>
<polyline points="529.445,209.214 555.868,232.141" fill="none" stroke="#866a10" stroke-width="1" shape-rendering="auto" opacity="0.75"/>
<polyline points="537.614,207.097 563.842,230.77" fill="none" stroke="#866a10" stroke-width="1" shape-rendering="auto" opacity="0.75"/>
<polyline points="545.783,204.979 571.815,229.398" fill="none" stroke="#866a10" stroke-width="1" shape-rendering="auto" opacity="0.75"/>
<polyline points="553.952,202.862 579.789,228.026" fill="none" stroke="#866a10" stroke-width="1" shape-rendering="auto" opacity="0.75"/>
<polyline points="562.121,200.745 587.762,226.654" fill="none" stroke="#866a10" stroke-width="1" shape-rendering="auto" opacity="0.75"/>
<polyline points="570.29,198.628 595.736,225.283" fill="none" stroke="#866a10" stroke-width="1" shape-rendering="auto" opacity="0.75"/>
<polyline points="578.459,196.51 603.709,223.911" fill="none" stroke="#866a10" stroke-width="1" shape-rendering="auto" opacity="0.75"/>
<polyline points="586.628,194.393 611.683,222.539" fill="none" stroke="#866a10" stroke-width="1" shape-rendering="auto" opacity="0.75"/>
<polyline points="594.797,192.276 619.657,221.168" fill="none" stroke="#866a10" stroke-width="1" shape-rendering="auto" opacity="0.75"/>
<polyline points="602.966,190.159 627.63,219.796" fill="none" stroke="#866a10" stroke-width="1" shape-rendering="auto" opacity="0.75"/>
<polyline points="611.134,188.041 635.604,218.424" fill="none" stroke="#866a10" stroke-width="1" shape-rendering="auto" opacity="0.75"/>
<polyline points="619.303,185.924 643.577,217.052" fill="none" stroke="#866a10" stroke-width="1" shape-rendering="auto" opacity="0.75"/>
<polyline points="627.472,183.807 651.551,215.681" fill="none" stroke="#866a10" stroke-width="1" shape-rendering="auto" opacity="0.75"/>
<polyline points="635.641,181.69 659.525,214.309" fill="none" stroke="#866a10" stroke-width="1" shape-rendering="auto" opacity="0.75"/>
<polyline points="643.81,179.572 667.498,212.937" fill="none" stroke="#866a10" stroke-width="1" shape-rendering="auto" opacity="0.75"/>
<polyline points="651.979,177.455 675.472,211.566" fill="none" stroke="#866a10" stroke-width="1" shape-rendering="auto" opacity="0.75"/>
<polyline points="660.148,175.338 683.445,210.194" fill="none" stroke="#866a10" stroke-width="1" shape-rendering="auto" opacity="0.75"/>
<polyline points="668.317,173.221 691.419,208.822" fill="none" stroke="#866a10" stroke-width="1" shape-rendering="auto" opacity="0.75"/>
<polyline points="676.486,171.103 699.392,207.45" fill="none" stroke="#866a10" stroke-width="1" shape-rendering="auto" opacity="0.75"/>
<polyline points="684.655,168.986 707.366,206.079" fill="none" stroke="#866a10" stroke-width="1" shape-rendering="auto" opacity="0.75"/>
<polyline points="692.824,166.869 715.34,204.707" fill="none" stroke="#866a10" stroke-width="1" shape-rendering="auto" opacity="0.75"/>
<polyline points="700.993,164.752 723.313,203.335" fill="none" stroke="#866a10" stroke-width="1" shape-rendering="auto" opacity="0.75"/>
<polyline points="709.162,162.634 731.287,201.963" fill="none" stroke="#866a10" stroke-width="1" shape-rendering="auto" opacity="0.75"/>
<polyline points="717.331,160.517 739.26,200.592" fill="none" stroke="#866a10" stroke-width="1" shape-rendering="auto" opacity="0.75"/>
<polyline points="725.5,158.4 742.7,200" fill="none" stroke="#866a10" stroke-width="1" shape-rendering="auto" opacity="0.75"/>
<polyline points="804,165.5 790,200" fill="none" stroke="#866a10" stroke-width="1" shape-rendering="auto" opacity="0.75"/>
<polyline points="812.471,169.529 797.824,203.088" fill="none" stroke="#866a10" stroke-width="1" shape-rendering="auto" opacity="0.75"/>
<polyline points="820.941,173.559 805.647,206.176" fill="none" stroke="#866a10" stroke-width="1" shape-rendering="auto" opacity="0.75"/>
<polyline points="829.412,177.588 813.471,209.265" fill="none" stroke="#866a10" stroke-width="1" shape-rendering="auto" opacity="0.75"/>
<polyline points="837.882,181.618 821.294,212.353" fill="none" stroke="#866a10" stroke-width="1" shape-rendering="auto" opacity="0.75"/>
<polyline points="846.353,185.647 829.118,215.441" fill="none" stroke="#866a10" stroke-width="1" shape-rendering="auto" opacity="0.75"/>
<polyline points="854.824,189.676 836.941,218.529" fill="none" stroke="#866a10" stroke-width="1" shape-rendering="auto" opacity="0.75"/>
<polyline points="863.294,193.706 844.765,221.618" fill="none" stroke="#866a10" stroke-width="1" shape-rendering="auto" opacity="0.75"/>
<polyline points="871.765,197.735 852.588,224.706" fill="none" stroke="#866a10" stroke-width="1" shape-rendering="auto" opacity="0.75"/>
<polyline points="880.235,201.765 860.412,227.794" fill="none" stroke="#866a10" stroke-width="1" shape-rendering="auto" opacity="0.75"/>
<polyline points="888.706,205.794 868.235,230.882" fill="none" stroke="#866a10" stroke-width="1" shape-rendering="auto" opacity="0.75"/>
<polyline points="897.176,209.824 876.059,233.971" fill="none" stroke="#866a10" stroke-width="1" shape-rendering="auto" opacity="0.75"/>
<polyline points="905.647,213.853 883.882,237.059" fill="none" stroke="#866a10" stroke-width="1" shape-rendering="auto" opacity="0.75"/>
<polyline points="914.118,217.882 891.706,240.147" fill="none" stroke="#866a10" stroke-width="1" shape-rendering="auto" opacity="0.75"/>
<polyline points="922.588,221.912 899.529,243.235" fill="none" stroke="#866a10" stroke-width="1" shape-rendering="auto" opacity="0.75"/>
<polyline points="931.059,225.941 907.353,246.324" fill="none" stroke="#866a10" stroke-width="1" shape-rendering="auto" opacity="0.75"/>
<polyline points="939.529,229.971 915.176,249.412" fill="none" stroke="#866a10" stroke-width="1" shape-rendering="auto" opacity="0.75"/>
<polyline points="948,234 923,252.5" fill="none" stroke="#866a10" stroke-width="1" shape-rendering="auto" opacity="0.75"/>
<polygon points="690,204 742.7,197.6 782,198.4 802,213 797,216 769,207 727,207 700,208" fill="#463101" />
<polygon points="531.5,236.4 551,226.6 630,214 680,203.5 725,201.5 727,206 702,206 686,245 684,262 630,254 584,248 573.5,238" fill="#866a10" />
<polygon points="531.5,236.4 551,226.6 630,214 680,203.5 725,201.5 727,206 702,206 686,245 684,262 630,254 584,248 573.5,238" fill="url(#pdash)" />
<polygon points="769,205.5 769,201 800,213 923,252.5 920.5,255 863,250 853,260 804,260 802,245 795,212" fill="#866a10" />
<polygon points="769,205.5 769,201 800,213 923,252.5 920.5,255 863,250 853,260 804,260 802,245 795,212" fill="url(#pdash2)" />
<polygon points="851,262 863,250 920.5,255 921,264 896,310 885,329 869,347 846,340" fill="#6a4902" />
<polygon points="851,262 863,250 875.5,252 871,300 873,342 869,347 846,340" fill="#815a03" />
<polygon points="875.5,252 898,254 899,300 886,327 873,342 871,300" fill="#eca406" />
<polyline points="887,253 885,326" fill="none" stroke="#866a10" stroke-width="1" shape-rendering="auto"/>
<polyline points="873,250 886,262 899,250" fill="none" stroke="#866a10" stroke-width="1" shape-rendering="auto"/>
<polyline points="873,272 886,284 899,272" fill="none" stroke="#866a10" stroke-width="1" shape-rendering="auto"/>
<polyline points="873,294 886,306 899,294" fill="none" stroke="#866a10" stroke-width="1" shape-rendering="auto"/>
<polyline points="873,314 886,326 899,314" fill="none" stroke="#866a10" stroke-width="1" shape-rendering="auto"/>
<polygon points="851,262 863,250 875.5,252 871,300 873,342 869,347 846,340" fill="url(#pm4)" opacity="0.7"/>
<polygon points="898,254 920.5,255 921,264 899,300" fill="url(#pm4)" opacity="0.8"/>
<circle cx="723.75" cy="384.5" r="106.25" fill="url(#gs)"/>
<g clip-path="url(#csph)" shape-rendering="auto" fill="none" stroke="#866a10" stroke-width="1">
<ellipse cx="723.75" cy="384.5" rx="102.6" ry="106.25"/>
<ellipse cx="723.75" cy="384.5" rx="92.0" ry="106.25"/>
<ellipse cx="723.75" cy="384.5" rx="75.1" ry="106.25"/>
<ellipse cx="723.75" cy="384.5" rx="53.1" ry="106.25"/>
<ellipse cx="723.75" cy="384.5" rx="27.5" ry="106.25"/>
<ellipse cx="723.75" cy="384.5" rx="0.0" ry="106.25"/>
<ellipse cx="723.75" cy="384.5" rx="27.5" ry="106.25"/>
<ellipse cx="723.75" cy="384.5" rx="53.1" ry="106.25"/>
<ellipse cx="723.75" cy="384.5" rx="75.1" ry="106.25"/>
<ellipse cx="723.75" cy="384.5" rx="92.0" ry="106.25"/>
<ellipse cx="723.75" cy="384.5" rx="102.6" ry="106.25"/>
<path d="M705.3 279.9 Q723.75 281.6 742.2 279.9"/>
<path d="M687.4 284.7 Q723.75 288.1 760.1 284.7"/>
<path d="M670.6 292.5 Q723.75 297.5 776.9 292.5"/>
<path d="M655.5 303.1 Q723.75 309.5 792.0 303.1"/>
<path d="M642.4 316.2 Q723.75 323.9 805.1 316.2"/>
<path d="M631.7 331.4 Q723.75 340.0 815.8 331.4"/>
<path d="M623.9 348.2 Q723.75 357.6 823.6 348.2"/>
<path d="M619.1 366.0 Q723.75 375.9 828.4 366.0"/>
<path d="M617.5 384.5 Q723.75 394.5 830.0 384.5"/>
<path d="M619.1 403.0 Q723.75 412.8 828.4 403.0"/>
<path d="M623.9 420.8 Q723.75 430.2 823.6 420.8"/>
<path d="M631.7 437.6 Q723.75 446.3 815.8 437.6"/>
<path d="M642.4 452.8 Q723.75 460.5 805.1 452.8"/>
<path d="M655.5 465.9 Q723.75 472.3 792.0 465.9"/>
<path d="M670.6 476.5 Q723.75 481.5 776.9 476.5"/>
<path d="M687.4 484.3 Q723.75 487.8 760.1 484.3"/>
<path d="M705.3 489.1 Q723.75 490.9 742.2 489.1"/>
</g>
<circle cx="723.75" cy="384.5" r="105" fill="none" stroke="#866a10" stroke-width="2" shape-rendering="auto"/>
<polygon points="459,532.5 525,511 592.5,489 657.5,466 690,462 790,480 790,550 775,593 760,628 760,641 754,671 626,671" fill="#865d03" />
<polygon points="459,532.5 525,511 525,517.5 517.5,535 540,553 500,566" fill="#765203" />
<polygon points="592.5,489 657.5,466 690,462 690,580 685,577.5 625,550 565,522.5 560,505" fill="#6e4d02" />
<polygon points="592.5,489 657.5,466 690,462 690,580 685,577.5 625,550 565,522.5 560,505" fill="url(#pm2)" opacity="0.8"/>
<polygon points="525,511 565,522.5 625,550 685,577.5 700,600 717.5,632.5 675,610 625,580 575,547.5 525,517.5" fill="#a57204" />
<polygon points="525,517.5 575,547.5 625,580 675,610 717.5,632.5 737,636 760,641 754,671 685,671 655,642.5 620,615 567.5,575 517.5,535" fill="#bc8304" />
<polygon points="575,547.5 625,580 675,610 717.5,632.5 737,636 760,641 754,671 685,671 655,642.5 620,615 567.5,575" fill="#cd8e05" />
<polygon points="650,595 675,610 717.5,632.5 737,636 760,641 754,671 685,671 655,642.5 637,628" fill="#dd9a05" />
<polygon points="700,640 722,634 760,641 754,671 700,671" fill="#eca406" />
<polygon points="459,532.5 525,511 525,517.5 517.5,535 567.5,575 620,615 655,642.5 685,671 626,671" fill="url(#pm3)" opacity="0.85"/>
<polyline points="525,517.5 517.5,535" fill="none" stroke="#866a10" stroke-width="1" shape-rendering="auto"/>
<polyline points="533.021,522.312 517.5,535" fill="none" stroke="#866a10" stroke-width="1" shape-rendering="auto"/>
<polyline points="533.021,522.312 524.479,540.583" fill="none" stroke="#866a10" stroke-width="1" shape-rendering="auto"/>
<polyline points="541.042,527.125 524.479,540.583" fill="none" stroke="#866a10" stroke-width="1" shape-rendering="auto"/>
<polyline points="541.042,527.125 531.458,546.167" fill="none" stroke="#866a10" stroke-width="1" shape-rendering="auto"/>
<polyline points="549.062,531.938 531.458,546.167" fill="none" stroke="#866a10" stroke-width="1" shape-rendering="auto"/>
<polyline points="549.062,531.938 538.438,551.75" fill="none" stroke="#866a10" stroke-width="1" shape-rendering="auto"/>
<polyline points="557.083,536.75 538.438,551.75" fill="none" stroke="#866a10" stroke-width="1" shape-rendering="auto"/>
<polyline points="557.083,536.75 545.417,557.333" fill="none" stroke="#866a10" stroke-width="1" shape-rendering="auto"/>
<polyline points="565.104,541.562 545.417,557.333" fill="none" stroke="#866a10" stroke-width="1" shape-rendering="auto"/>
<polyline points="565.104,541.562 552.396,562.917" fill="none" stroke="#866a10" stroke-width="1" shape-rendering="auto"/>
<polyline points="573.125,546.375 552.396,562.917" fill="none" stroke="#866a10" stroke-width="1" shape-rendering="auto"/>
<polyline points="573.125,546.375 559.375,568.5" fill="none" stroke="#866a10" stroke-width="1" shape-rendering="auto"/>
<polyline points="581.146,551.495 559.375,568.5" fill="none" stroke="#866a10" stroke-width="1" shape-rendering="auto"/>
<polyline points="581.146,551.495 566.354,574.083" fill="none" stroke="#866a10" stroke-width="1" shape-rendering="auto"/>
<polyline points="589.167,556.708 566.354,574.083" fill="none" stroke="#866a10" stroke-width="1" shape-rendering="auto"/>
<polyline points="589.167,556.708 573.333,579.444" fill="none" stroke="#866a10" stroke-width="1" shape-rendering="auto"/>
<polyline points="597.188,561.922 573.333,579.444" fill="none" stroke="#866a10" stroke-width="1" shape-rendering="auto"/>
<polyline points="597.188,561.922 580.312,584.762" fill="none" stroke="#866a10" stroke-width="1" shape-rendering="auto"/>
<polyline points="605.208,567.135 580.312,584.762" fill="none" stroke="#866a10" stroke-width="1" shape-rendering="auto"/>
<polyline points="605.208,567.135 587.292,590.079" fill="none" stroke="#866a10" stroke-width="1" shape-rendering="auto"/>
<polyline points="613.229,572.349 587.292,590.079" fill="none" stroke="#866a10" stroke-width="1" shape-rendering="auto"/>
<polyline points="613.229,572.349 594.271,595.397" fill="none" stroke="#866a10" stroke-width="1" shape-rendering="auto"/>
<polyline points="621.25,577.562 594.271,595.397" fill="none" stroke="#866a10" stroke-width="1" shape-rendering="auto"/>
<polyline points="621.25,577.562 601.25,600.714" fill="none" stroke="#866a10" stroke-width="1" shape-rendering="auto"/>
<polyline points="629.271,582.562 601.25,600.714" fill="none" stroke="#866a10" stroke-width="1" shape-rendering="auto"/>
<polyline points="629.271,582.562 608.229,606.032" fill="none" stroke="#866a10" stroke-width="1" shape-rendering="auto"/>
<polyline points="637.292,587.375 608.229,606.032" fill="none" stroke="#866a10" stroke-width="1" shape-rendering="auto"/>
<polyline points="637.292,587.375 615.208,611.349" fill="none" stroke="#866a10" stroke-width="1" shape-rendering="auto"/>
<polyline points="645.312,592.188 615.208,611.349" fill="none" stroke="#866a10" stroke-width="1" shape-rendering="auto"/>
<polyline points="645.312,592.188 622.188,616.719" fill="none" stroke="#866a10" stroke-width="1" shape-rendering="auto"/>
<polyline points="653.333,597 622.188,616.719" fill="none" stroke="#866a10" stroke-width="1" shape-rendering="auto"/>
<polyline points="653.333,597 629.167,622.202" fill="none" stroke="#866a10" stroke-width="1" shape-rendering="auto"/>
<polyline points="661.354,601.812 629.167,622.202" fill="none" stroke="#866a10" stroke-width="1" shape-rendering="auto"/>
<polyline points="661.354,601.812 636.146,627.686" fill="none" stroke="#866a10" stroke-width="1" shape-rendering="auto"/>
<polyline points="669.375,606.625 636.146,627.686" fill="none" stroke="#866a10" stroke-width="1" shape-rendering="auto"/>
<polyline points="669.375,606.625 643.125,633.17" fill="none" stroke="#866a10" stroke-width="1" shape-rendering="auto"/>
<polyline points="677.396,611.268 643.125,633.17" fill="none" stroke="#866a10" stroke-width="1" shape-rendering="auto"/>
<polyline points="677.396,611.268 650.104,638.653" fill="none" stroke="#866a10" stroke-width="1" shape-rendering="auto"/>
<polyline points="685.417,615.515 650.104,638.653" fill="none" stroke="#866a10" stroke-width="1" shape-rendering="auto"/>
<polyline points="685.417,615.515 657.083,644.479" fill="none" stroke="#866a10" stroke-width="1" shape-rendering="auto"/>
<polyline points="693.438,619.761 657.083,644.479" fill="none" stroke="#866a10" stroke-width="1" shape-rendering="auto"/>
<polyline points="693.438,619.761 664.062,651.109" fill="none" stroke="#866a10" stroke-width="1" shape-rendering="auto"/>
<polyline points="701.458,624.007 664.062,651.109" fill="none" stroke="#866a10" stroke-width="1" shape-rendering="auto"/>
<polyline points="701.458,624.007 671.042,657.74" fill="none" stroke="#866a10" stroke-width="1" shape-rendering="auto"/>
<polyline points="709.479,628.254 671.042,657.74" fill="none" stroke="#866a10" stroke-width="1" shape-rendering="auto"/>
<polyline points="709.479,628.254 678.021,664.37" fill="none" stroke="#866a10" stroke-width="1" shape-rendering="auto"/>
<polyline points="717.5,632.5 678.021,664.37" fill="none" stroke="#866a10" stroke-width="1" shape-rendering="auto"/>
<polyline points="717.5,632.5 685,671" fill="none" stroke="#866a10" stroke-width="1" shape-rendering="auto"/>
<polyline points="525,517.5 575,547.5 625,580 675,610 717.5,632.5" fill="none" stroke="#866a10" stroke-width="1" shape-rendering="auto"/>
<polyline points="517.5,535 567.5,575 620,615 655,642.5 685,671" fill="none" stroke="#866a10" stroke-width="1" shape-rendering="auto"/>
<polyline points="525,517.5 530,512" fill="none" stroke="#866a10" stroke-width="1" shape-rendering="auto" opacity="0.8"/>
<polyline points="546.389,530.333 547.778,519.556" fill="none" stroke="#866a10" stroke-width="1" shape-rendering="auto" opacity="0.8"/>
<polyline points="567.778,543.167 565.556,527.111" fill="none" stroke="#866a10" stroke-width="1" shape-rendering="auto" opacity="0.8"/>
<polyline points="589.167,556.708 583.333,534.667" fill="none" stroke="#866a10" stroke-width="1" shape-rendering="auto" opacity="0.8"/>
<polyline points="610.556,570.611 601.111,542.222" fill="none" stroke="#866a10" stroke-width="1" shape-rendering="auto" opacity="0.8"/>
<polyline points="631.944,584.167 618.889,549.778" fill="none" stroke="#866a10" stroke-width="1" shape-rendering="auto" opacity="0.8"/>
<polyline points="653.333,597 636.667,557.333" fill="none" stroke="#866a10" stroke-width="1" shape-rendering="auto" opacity="0.8"/>
<polyline points="674.722,609.833 654.444,564.889" fill="none" stroke="#866a10" stroke-width="1" shape-rendering="auto" opacity="0.8"/>
<polyline points="696.111,621.176 672.222,572.444" fill="none" stroke="#866a10" stroke-width="1" shape-rendering="auto" opacity="0.8"/>
<polyline points="717.5,632.5 690,580" fill="none" stroke="#866a10" stroke-width="1" shape-rendering="auto" opacity="0.8"/>
<polyline points="459,532.5 626,671" fill="none" stroke="#866a10" stroke-width="1" shape-rendering="auto"/>
<polyline points="459,532.5 525,511" fill="none" stroke="#866a10" stroke-width="1" shape-rendering="auto"/>
<polygon points="516,239 573.5,238 584.3,250 590,265.7 593,320 595,490 588,500 560,512 530,512 527,498 518.5,320" fill="#422d01" />
<polygon points="519.5,239 562,238 564,320 568.5,498 566,512 530,512 528.5,498 522,320" fill="#bf8404" />
<polygon points="562,238 573.5,238 577,260 580,320 584,490 575,506 566,512 568.5,498 564,320" fill="#cd8e05" />
<polygon points="519.5,239 562,238 564,320 568.5,498 566,512 530,512 528.5,498 522,320" fill="url(#pcolL)" />
<polygon points="562,238 573.5,238 577,260 580,320 584,490 575,506 566,512 568.5,498 564,320" fill="url(#pcolR)" />
<polyline points="562,238 564,320 568.5,498" fill="none" stroke="#866a10" stroke-width="2" shape-rendering="auto"/>
<polygon points="516,239 519.5,239 522,320 528.5,498 530,512 527,498 518.5,320" fill="url(#pm4)" />
<polygon points="573.5,238 584.3,250 590,265.7 593,320 595,490 588,500 575,506 584,490 580,320 577,260" fill="url(#pm4)" />
<polyline points="584,262 587,320 589,492" fill="none" stroke="#866a10" stroke-width="1.5" shape-rendering="auto"/>
<polyline points="516,239 518.5,320 527,498" fill="none" stroke="#866a10" stroke-width="1" shape-rendering="auto"/>
<polygon points="702,205 686,245 684,320 684.5,445 685,526 700,600 716,626 737,636 750,636 760,628 775,593 790,550 790,526 797.5,445 802,320 802.5,245 795,205" fill="#815a03" />
<polygon points="702,205 727,205.5 725,245 722,320 720,400 717.5,526 717,600 730,640 716,626 700,600 685,526 684.5,445 684,320 686,245" fill="#885f03" />
<polygon points="697,280 709,280 708,400 705,526 704,600 700,600 690,526 697,400" fill="#6e4d02" />
<polygon points="709,280 722,280 720,400 717.5,526 717,600 716,626 704,600 705,526 708,400" fill="#7f5803" />
<polygon points="685,490 717.5,490 717,600 716,626 700,600 685,526" fill="#765203" />
<polygon points="702,490 717.5,490 717,600 716,626 708,612 700,560" fill="#503702" />
<polygon points="769.4,205.5 795,205 802.5,245 802,320 797.5,445 790,526 790,550 775,593 760,628 760,600 760,526 767,400 769,320 770,245" fill="#8d6203" />
<polygon points="786,215 802.5,245 802,320 797.5,445 790,526 790,550 778,585 774,526 781,445 783,320 784,245" fill="#463101" />
<polygon points="727,205.5 725,245 722,320 720,400 717.5,526 717,600 730,640 737,636 750,636 752,636 760,600 760,526 767,400 769,320 770,245 769.4,205.5" fill="#eca406" />
<polyline points="748,205.5 747,245 745.5,320 743.5,400 739,526 738.5,600 738,636" fill="none" stroke="#866a10" stroke-width="1" shape-rendering="auto"/>
<polyline points="726.975,206 747.911,209 769.408,206" fill="none" stroke="#866a10" stroke-width="1" shape-rendering="auto"/>
<polyline points="698.8,213 726.975,206" fill="none" stroke="#866a10" stroke-width="1" shape-rendering="auto" opacity="0.8"/>
<polyline points="769.408,206 796.312,212" fill="none" stroke="#866a10" stroke-width="1" shape-rendering="auto" opacity="0.8"/>
<polyline points="725.608,233 747.228,236 769.818,233" fill="none" stroke="#866a10" stroke-width="1" shape-rendering="auto"/>
<polyline points="688,240 725.608,233" fill="none" stroke="#866a10" stroke-width="1" shape-rendering="auto" opacity="0.8"/>
<polyline points="769.818,233 801.375,239" fill="none" stroke="#866a10" stroke-width="1" shape-rendering="auto" opacity="0.8"/>
<polyline points="726.975,206 747.228,236 769.408,206" fill="none" stroke="#866a10" stroke-width="1" shape-rendering="auto"/>
<polyline points="724.17,265.75 746.525,268.75 769.723,265.75" fill="none" stroke="#866a10" stroke-width="1" shape-rendering="auto"/>
<polyline points="685.26,272.75 724.17,265.75" fill="none" stroke="#866a10" stroke-width="1" shape-rendering="auto" opacity="0.8"/>
<polyline points="769.723,265.75 802.322,271.75" fill="none" stroke="#866a10" stroke-width="1" shape-rendering="auto" opacity="0.8"/>
<polyline points="725.608,233 746.525,268.75 769.818,233" fill="none" stroke="#866a10" stroke-width="1" shape-rendering="auto"/>
<polyline points="722.92,297 745.9,300 769.307,297" fill="none" stroke="#866a10" stroke-width="1" shape-rendering="auto"/>
<polyline points="684.427,304 722.92,297" fill="none" stroke="#866a10" stroke-width="1" shape-rendering="auto" opacity="0.8"/>
<polyline points="769.307,297 802.113,303" fill="none" stroke="#866a10" stroke-width="1" shape-rendering="auto" opacity="0.8"/>
<polyline points="724.17,265.75 745.9,300 769.723,265.75" fill="none" stroke="#866a10" stroke-width="1" shape-rendering="auto"/>
<polyline points="721.763,329.5 745.188,332.5 768.763,329.5" fill="none" stroke="#866a10" stroke-width="1" shape-rendering="auto"/>
<polyline points="684.066,336.5 721.763,329.5" fill="none" stroke="#866a10" stroke-width="1" shape-rendering="auto" opacity="0.8"/>
<polyline points="768.763,329.5 801.442,335.5" fill="none" stroke="#866a10" stroke-width="1" shape-rendering="auto" opacity="0.8"/>
<polyline points="722.92,297 745.188,332.5 769.307,297" fill="none" stroke="#866a10" stroke-width="1" shape-rendering="auto"/>
<polyline points="720.975,361 744.4,364 767.975,361" fill="none" stroke="#866a10" stroke-width="1" shape-rendering="auto"/>
<polyline points="684.192,368 720.975,361" fill="none" stroke="#866a10" stroke-width="1" shape-rendering="auto" opacity="0.8"/>
<polyline points="767.975,361 800.308,367" fill="none" stroke="#866a10" stroke-width="1" shape-rendering="auto" opacity="0.8"/>
<polyline points="721.763,329.5 744.4,364 768.763,329.5" fill="none" stroke="#866a10" stroke-width="1" shape-rendering="auto"/>
<polyline points="720.263,389.5 743.688,392.5 767.263,389.5" fill="none" stroke="#866a10" stroke-width="1" shape-rendering="auto"/>
<polyline points="684.306,396.5 720.263,389.5" fill="none" stroke="#866a10" stroke-width="1" shape-rendering="auto" opacity="0.8"/>
<polyline points="767.263,389.5 799.282,395.5" fill="none" stroke="#866a10" stroke-width="1" shape-rendering="auto" opacity="0.8"/>
<polyline points="720.975,361 743.688,392.5 767.975,361" fill="none" stroke="#866a10" stroke-width="1" shape-rendering="auto"/>
<polyline points="719.643,418 742.75,421 766,418" fill="none" stroke="#866a10" stroke-width="1" shape-rendering="auto"/>
<polyline points="684.42,425 719.643,418" fill="none" stroke="#866a10" stroke-width="1" shape-rendering="auto" opacity="0.8"/>
<polyline points="766,418 798.256,424" fill="none" stroke="#866a10" stroke-width="1" shape-rendering="auto" opacity="0.8"/>
<polyline points="720.263,389.5 742.75,421 767.263,389.5" fill="none" stroke="#866a10" stroke-width="1" shape-rendering="auto"/>
<polyline points="719.077,446.5 741.732,449.5 764.417,446.5" fill="none" stroke="#866a10" stroke-width="1" shape-rendering="auto"/>
<polyline points="684.552,453.5 719.077,446.5" fill="none" stroke="#866a10" stroke-width="1" shape-rendering="auto" opacity="0.8"/>
<polyline points="764.417,446.5 796.806,452.5" fill="none" stroke="#866a10" stroke-width="1" shape-rendering="auto" opacity="0.8"/>
<polyline points="719.643,418 741.732,449.5 766,418" fill="none" stroke="#866a10" stroke-width="1" shape-rendering="auto"/>
<polyline points="718.512,475 740.714,478 762.833,475" fill="none" stroke="#866a10" stroke-width="1" shape-rendering="auto"/>
<polyline points="684.728,482 718.512,475" fill="none" stroke="#866a10" stroke-width="1" shape-rendering="auto" opacity="0.8"/>
<polyline points="762.833,475 794.167,481" fill="none" stroke="#866a10" stroke-width="1" shape-rendering="auto" opacity="0.8"/>
<polyline points="719.077,446.5 740.714,478 764.417,446.5" fill="none" stroke="#866a10" stroke-width="1" shape-rendering="auto"/>
<polyline points="717.956,503 739.714,506 761.278,503" fill="none" stroke="#866a10" stroke-width="1" shape-rendering="auto"/>
<polyline points="684.901,510 717.956,503" fill="none" stroke="#866a10" stroke-width="1" shape-rendering="auto" opacity="0.8"/>
<polyline points="761.278,503 791.574,509" fill="none" stroke="#866a10" stroke-width="1" shape-rendering="auto" opacity="0.8"/>
<polyline points="718.512,475 739.714,506 762.833,475" fill="none" stroke="#866a10" stroke-width="1" shape-rendering="auto"/>
<polyline points="717.47,530.5 738.949,533.5 760,530.5" fill="none" stroke="#866a10" stroke-width="1" shape-rendering="auto"/>
<polyline points="687.331,537.5 717.47,530.5" fill="none" stroke="#866a10" stroke-width="1" shape-rendering="auto" opacity="0.8"/>
<polyline points="760,530.5 790,536.5" fill="none" stroke="#866a10" stroke-width="1" shape-rendering="auto" opacity="0.8"/>
<polyline points="717.956,503 738.949,533.5 761.278,503" fill="none" stroke="#866a10" stroke-width="1" shape-rendering="auto"/>
<polyline points="717.301,555.5 738.78,558.5 760,555.5" fill="none" stroke="#866a10" stroke-width="1" shape-rendering="auto"/>
<polyline points="692.399,562.5 717.301,555.5" fill="none" stroke="#866a10" stroke-width="1" shape-rendering="auto" opacity="0.8"/>
<polyline points="760,555.5 785.988,561.5" fill="none" stroke="#866a10" stroke-width="1" shape-rendering="auto" opacity="0.8"/>
<polyline points="717.47,530.5 738.78,558.5 760,530.5" fill="none" stroke="#866a10" stroke-width="1" shape-rendering="auto"/>
<polyline points="717.115,583 738.595,586 760,583" fill="none" stroke="#866a10" stroke-width="1" shape-rendering="auto"/>
<polyline points="697.973,590 717.115,583" fill="none" stroke="#866a10" stroke-width="1" shape-rendering="auto" opacity="0.8"/>
<polyline points="760,583 776.395,589" fill="none" stroke="#866a10" stroke-width="1" shape-rendering="auto" opacity="0.8"/>
<polyline points="717.301,555.5 738.595,586 760,555.5" fill="none" stroke="#866a10" stroke-width="1" shape-rendering="auto"/>
<polyline points="719.6,608 738.347,611 758.222,608" fill="none" stroke="#866a10" stroke-width="1" shape-rendering="auto"/>
<polyline points="709.231,615 719.6,608" fill="none" stroke="#866a10" stroke-width="1" shape-rendering="auto" opacity="0.8"/>
<polyline points="758.222,608 766,614" fill="none" stroke="#866a10" stroke-width="1" shape-rendering="auto" opacity="0.8"/>
<polyline points="717.115,583 738.347,611 760,583" fill="none" stroke="#866a10" stroke-width="1" shape-rendering="auto"/>
<polyline points="727.075,631 738.028,634 753.111,631" fill="none" stroke="#866a10" stroke-width="1" shape-rendering="auto"/>
<polyline points="716,638 727.075,631" fill="none" stroke="#866a10" stroke-width="1" shape-rendering="auto" opacity="0.8"/>
<polyline points="753.111,631 760,637" fill="none" stroke="#866a10" stroke-width="1" shape-rendering="auto" opacity="0.8"/>
<polyline points="719.6,608 738.028,634 758.222,608" fill="none" stroke="#866a10" stroke-width="1" shape-rendering="auto"/>
<polygon points="702,205 727,205.5 725,245 722,320 720,400 717.5,526 717,600 730,640 716,626 700,600 685,526 684.5,445 684,320 686,245" fill="url(#pm5)" opacity="0.8"/>
<polygon points="786,215 802.5,245 802,320 797.5,445 790,526 790,550 778,585 774,526 781,445 783,320 784,245" fill="url(#pm4)" />
<polygon points="716,626 730,640 737,636 750,636 760,628 760,641 740,650 720,640" fill="#d49305" />
<polyline points="738,636 700,671" fill="none" stroke="#866a10" stroke-width="1" shape-rendering="auto"/>
<polyline points="738,636 725,671" fill="none" stroke="#866a10" stroke-width="1" shape-rendering="auto"/>
<polyline points="738,636 754,660" fill="none" stroke="#866a10" stroke-width="1" shape-rendering="auto"/>
<polyline points="716,626 738,636 760,628" fill="none" stroke="#866a10" stroke-width="1" shape-rendering="auto"/>
<g transform="rotate(-8 647.5 396.5)" shape-rendering="auto">
<ellipse cx="647.5" cy="396.5" rx="26" ry="40" fill="#0e8a0e" stroke="#fff" stroke-width="2.5"/>
<ellipse cx="646.5" cy="396.5" rx="23.5" ry="37.5" fill="none" stroke="#f00" stroke-width="1.8"/>
<ellipse cx="643" cy="395" rx="19" ry="35" fill="none" stroke="#f00" stroke-width="1.2"/>
<path d="M626 380 L668 392 M624 398 L670 410 M630 420 L664 426 M640 360 L636 434 M652 360 L648 436 M630 372 L660 430 M664 372 L632 428 M628 388 L652 358 M636 432 L668 396 M626 370 L645 372 L632 396 M628 405 L640 380" stroke="#f00" stroke-width="1" fill="none"/>
</g>
<polyline points="669.5,392.5 466,428.7" fill="none" stroke="#0000ff" stroke-width="2" shape-rendering="auto"/>
<path d="M455.5 429.5 L459.5 423.5 L469 428.5 Z M463 430.5 L480 432.5 M466 427 L474 431" stroke="#00f" stroke-width="1.4" fill="none" shape-rendering="auto"/>
<polygon points="466,427.5 472,427 474,430.5 467,431" fill="#0000ff" />
<polyline points="596,352 594,355 594,361 617.5,366" fill="none" stroke="#f00" stroke-width="1.3" shape-rendering="auto"/>
<polyline points="591,350 594,355" fill="none" stroke="#f00" stroke-width="1" shape-rendering="auto"/>
<text x="444.3" y="431" font-family="Liberation Sans,sans-serif" font-size="13.5" fill="#0000ff" textLength="7" lengthAdjust="spacingAndGlyphs">Z</text>
<polyline points="959,229 943,237.5 930.5,251 923,255 921,265 908,292.5 896,310 885,329 869,347.5 858,343 846,340" fill="none" stroke="#fff" stroke-width="1.6" shape-rendering="auto" stroke-linejoin="round"/>
<polyline points="829,393 826,410 818,430 806,449 794,462" fill="none" stroke="#fff" stroke-width="1.6" shape-rendering="auto" stroke-linejoin="round"/>
<polyline points="790,550 775,593.5 760,628.5 760,641 754,670.5" fill="none" stroke="#fff" stroke-width="1.8" shape-rendering="auto" stroke-linejoin="round"/>
</svg>
</body>
</html>
